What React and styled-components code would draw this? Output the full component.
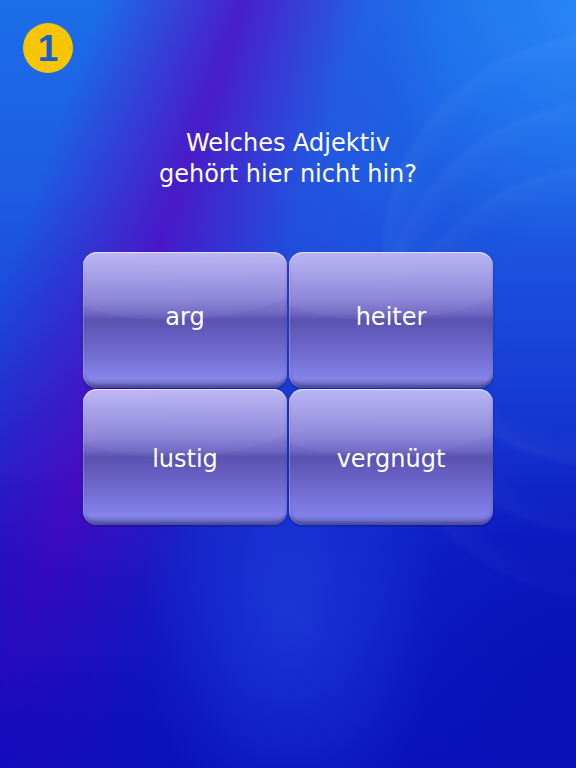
import React from 'react'
import styled, { createGlobalStyle } from 'styled-components'

const GlobalStyle = createGlobalStyle`
  html, body {
    margin: 0;
    padding: 0;
    height: 100%;
  }
  #root {
    min-height: 100%;
  }
`

const ring = (cy, a) =>
  `radial-gradient(ellipse 230px 220px at 610px ${cy}px, transparent 0 86%, rgba(255, 255, 255, ${a}) 97%, transparent 100%)`

const Screen = styled.div`
  width: 576px;
  height: 768px;
  box-sizing: border-box;
  padding: 23px;
  overflow: hidden;
  display: flex;
  flex-direction: column;
  font-family: 'DejaVu Sans', 'Noto Sans', sans-serif;
  color: #fff;
  background:
    radial-gradient(ellipse 240px 300px at 0px 768px, rgba(10, 14, 190, 0.85), transparent 100%),
    radial-gradient(ellipse 200px 260px at 576px 700px, rgba(8, 14, 180, 0.8), transparent 100%),
    ${ring(250, 0.04)},
    ${ring(318, 0.035)},
    ${ring(382, 0.03)},
    radial-gradient(ellipse 150px 230px at 290px 610px, rgba(40, 80, 235, 0.5), transparent 100%),
    radial-gradient(ellipse 190px 240px at 576px 20px, rgba(45, 145, 255, 0.65), transparent 100%),
    linear-gradient(109deg,
      rgba(90, 0, 190, 0) 12%,
      rgba(90, 0, 190, 0.72) 29%,
      rgba(90, 0, 190, 0.1) 44%,
      rgba(90, 0, 190, 0) 56%),
    linear-gradient(180deg, #1c6ee9 0%, #1d5ce2 25%, #1840d6 48%, #0e20c6 70%, #0a12bc 100%);
`

const Badge = styled.div`
  width: 50px;
  height: 50px;
  border-radius: 50%;
  background: #f8c600;
  color: #1d5ccf;
  display: flex;
  align-items: center;
  justify-content: center;
  font-family: 'Liberation Sans', Arial, sans-serif;
  font-weight: 700;
  font-size: 37px;
  line-height: 1;
`

const Question = styled.h1`
  margin: 55px 0 0;
  font-size: 24px;
  font-weight: 400;
  line-height: 31px;
  text-align: center;
`

const Answers = styled.div`
  margin: 62px auto 0;
  display: grid;
  grid-template-columns: repeat(2, 204px);
  grid-auto-rows: 136px;
  gap: 1px 2px;
`

const Answer = styled.button`
  position: relative;
  overflow: hidden;
  border: none;
  border-radius: 14px;
  padding: ${p => (p.$low ? '4px 0 0' : '0 0 6px')};
  font-family: 'DejaVu Sans', 'Noto Sans', sans-serif;
  font-size: 24px;
  color: #fff;
  cursor: pointer;
  background: linear-gradient(180deg,
    ${p => p.$top} 0%,
    #a19be6 16%,
    #8a82d6 34%,
    #7068c4 45%,
    #5a52ae 50%,
    #645cbe 60%,
    #7571d4 78%,
    ${p => p.$bottom} 93%,
    #6262b2 100%);
  box-shadow:
    inset 0 1px 1px rgba(255, 255, 255, 0.6),
    inset 1px 0 1px rgba(255, 255, 255, 0.25),
    inset 0 -3px 3px rgba(40, 40, 120, 0.45),
    0 1px 2px rgba(0, 0, 60, 0.4);

  &::before {
    content: '';
    position: absolute;
    left: -20%;
    right: -20%;
    top: -40%;
    height: 90%;
    border-radius: 50%;
    background: linear-gradient(180deg, rgba(255, 255, 255, 0.12), rgba(255, 255, 255, 0.03));
    transform: rotate(-3deg);
  }

  span {
    position: relative;
  }
`

const answers = [
  { label: 'arg', top: '#b8b0f2', bottom: '#8686ea' },
  { label: 'heiter', top: '#b2aef2', bottom: '#8484ea' },
  { label: 'lustig', top: '#bab2f4', bottom: '#8484ec', low: true },
  { label: 'vergnügt', top: '#b0b0f2', bottom: '#8080ea', low: true },
]

export default function App() {
  return (
    <>
      <GlobalStyle />
      <Screen>
        <Badge>1</Badge>
        <Question>
          Welches Adjektiv
          <br />
          gehört hier nicht hin?
        </Question>
        <Answers>
          {answers.map(a => (
            <Answer key={a.label} $top={a.top} $bottom={a.bottom} $low={a.low}>
              <span>{a.label}</span>
            </Answer>
          ))}
        </Answers>
      </Screen>
    </>
  )
}
